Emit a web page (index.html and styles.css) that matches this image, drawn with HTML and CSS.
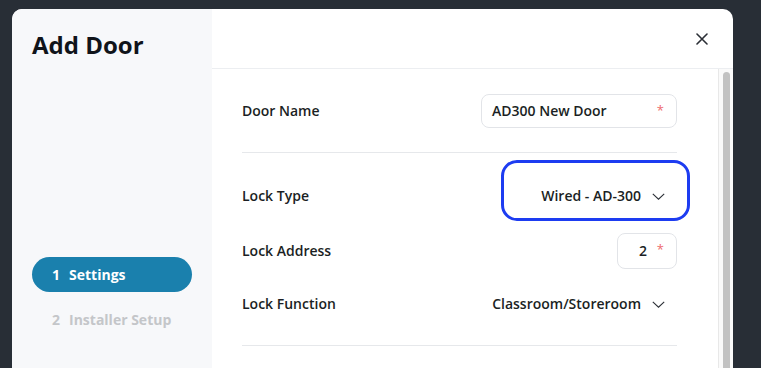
FILE: index.html
```html
<!DOCTYPE html>
<html lang="en">
<head>
  <meta charset="UTF-8" />
  <title>Add Door</title>
  <link rel="stylesheet" href="styles.css">
</head>
<body>
  <div class="modal">
    <aside class="sidebar">
      <h1 class="title">Add Door</h1>
      <ul class="steps">
        <li class="step active"><span class="num">1</span>Settings</li>
        <li class="step"><span class="num">2</span>Installer Setup</li>
      </ul>
    </aside>

    <section class="main">
      <div class="header">
        <button class="close" aria-label="Close">
          <svg width="12" height="12" viewBox="0 0 12 12"><path d="M1 1l10 10M11 1L1 11" stroke="#2b2f36" stroke-width="1.6" stroke-linecap="round"/></svg>
        </button>
      </div>

      <div class="body">
        <div class="content">
          <div class="section first">
            <div class="row">
              <label class="label">Door Name</label>
              <div class="input wide">
                <span class="value">AD300 New Door</span>
                <span class="req">*</span>
              </div>
            </div>
          </div>

          <div class="section second">
            <div class="row type-row">
              <label class="label">Lock Type</label>
              <div class="select focused">
                <span class="value">Wired - AD-300</span>
                <svg class="chev" width="13" height="7" viewBox="0 0 13 7"><path d="M0.8 0.8l5.7 5.4 5.7-5.4" fill="none" stroke="#2b2f36" stroke-width="1.1"/></svg>
              </div>
            </div>
            <div class="row address-row">
              <label class="label">Lock Address</label>
              <div class="input narrow">
                <span class="value">2</span>
                <span class="req">*</span>
              </div>
            </div>
            <div class="row function-row">
              <label class="label">Lock Function</label>
              <div class="select">
                <span class="value">Classroom/Storeroom</span>
                <svg class="chev" width="13" height="7" viewBox="0 0 13 7"><path d="M0.8 0.8l5.7 5.4 5.7-5.4" fill="none" stroke="#2b2f36" stroke-width="1.1"/></svg>
              </div>
            </div>
          </div>
        </div>

        <div class="scrollbar">
          <div class="thumb"></div>
        </div>
      </div>
    </section>
  </div>
</body>
</html>
```

FILE: styles.css
```css
body {
  margin: 0;
  overflow: hidden;
  background: #282e36;
  font-family: "Open Sans", "Noto Sans", sans-serif;
  color: #1b1f24;
}

.modal {
  display: flex;
  width: 721px;
  height: 400px;
  margin: 9px 0 0 12px;
  background: #fff;
  border-radius: 10px 10px 0 0;
  overflow: hidden;
}

/* left column */
.sidebar {
  width: 200px;
  flex-shrink: 0;
  background: #f7f8fa;
  padding: 20px 20px;
  box-sizing: border-box;
}

.title {
  margin: 0;
  font-size: 24px;
  line-height: 32px;
  font-weight: 700;
  color: #10141a;
}

.steps {
  list-style: none;
  margin: 196px 0 0;
  padding: 0;
}

.step {
  height: 35px;
  line-height: 35px;
  padding: 0 20px;
  border-radius: 18px;
  font-size: 14px;
  font-weight: 700;
  color: #c4c6c9;
}

.step + .step {
  margin-top: 10px;
}

.step.active {
  background: #1a80ad;
  color: #fff;
}

.num {
  margin-right: 9px;
}

/* right column */
.main {
  flex: 1;
  display: flex;
  flex-direction: column;
}

.header {
  height: 59px;
  flex-shrink: 0;
  border-bottom: 1px solid #eceef1;
  display: flex;
  justify-content: flex-end;
  align-items: center;
  padding-right: 25px;
}

.close {
  border: 0;
  background: none;
  padding: 0;
  width: 12px;
  height: 12px;
  display: flex;
}

.body {
  flex: 1;
  display: flex;
}

.content {
  flex: 1;
  padding: 0 41px 0 30px;
}

.section {
  border-bottom: 1px solid #e6e8eb;
}

.section.first {
  padding: 25px 0 24px;
}

.section.second {
  padding: 7px 0 24px;
}

.row {
  display: flex;
  justify-content: space-between;
  align-items: center;
}

.type-row {
  align-items: baseline;
}

.address-row {
  margin-top: 12px;
}

.function-row {
  margin-top: 18px;
  height: 34px;
}

.label {
  font-size: 14px;
  font-weight: 600;
  line-height: 20px;
}

.value {
  font-size: 14px;
  font-weight: 600;
  line-height: 20px;
}

.input {
  display: flex;
  align-items: center;
  justify-content: space-between;
  box-sizing: border-box;
  border: 1px solid #e2e4e8;
  border-radius: 8px;
  background: #fff;
}

.input.wide {
  width: 196px;
  height: 34px;
  padding: 0 12px 0 10px;
}

.input.narrow {
  width: 60px;
  height: 36px;
  padding: 0 12px 0 21px;
}

.req {
  color: #ee6a6d;
  font-size: 13px;
  line-height: 13px;
  align-self: flex-start;
  margin-top: 9px;
}

.select {
  display: flex;
  align-items: center;
  padding-right: 12px;
}

.chev {
  margin-left: 11px;
}

.select.focused {
  box-sizing: border-box;
  border: 3px solid #1d3cf1;
  border-radius: 16px;
  padding: 23px 22px 12px 10px;
  margin-right: -13px;
  width: 189px;
  justify-content: flex-end;
}

.scrollbar {
  width: 15px;
  flex-shrink: 0;
  border-left: 1px solid #e8e8e8;
  background: #fafafa;
  padding: 3px 3px 0 4px;
  box-sizing: border-box;
}

.thumb {
  height: 400px;
  background: #c2c2c2;
  border-radius: 4px;
}
```
